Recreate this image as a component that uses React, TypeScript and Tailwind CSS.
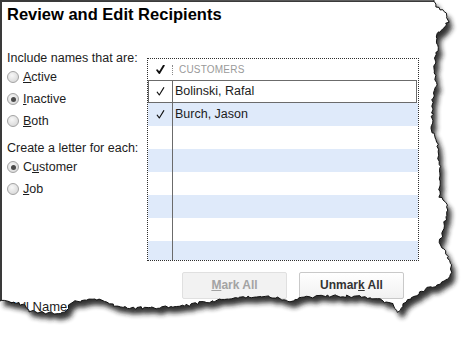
import React from 'react';

const RIGHT_EDGE: [number, number][] = [
  [434, 0], [437, 6], [446, 14], [448, 21], [444, 28], [437, 34], [438, 48], [434, 66], [436, 84],
  [433, 100], [432, 132], [437, 140], [439, 158], [441, 174], [439, 196], [447, 203], [446, 217],
  [443, 232], [440, 242], [446, 254], [452, 266], [450, 278], [440, 284],
];

const BOTTOM_EDGE: [number, number][] = [
  [430, 287], [418, 294], [408, 300], [402, 306], [399, 313], [392, 304], [380, 300], [360, 297],
  [340, 296], [320, 296], [300, 298], [288, 302], [280, 298], [268, 297], [250, 297], [232, 298],
  [215, 301], [200, 303], [185, 306], [170, 307], [150, 308], [130, 308], [112, 305], [100, 300],
  [85, 300], [72, 302], [67, 310], [60, 313], [45, 313], [30, 311], [23, 305], [12, 302], [0, 301],
];

// deterministic jagged edge
function tornPoints() {
  let seed = 7;
  const rnd = () => {
    seed = (seed * 9301 + 49297) % 233280;
    return seed / 233280 - 0.5;
  };
  const key = [...RIGHT_EDGE, ...BOTTOM_EDGE];
  const out: [number, number][] = [];
  for (let i = 0; i < key.length - 1; i++) {
    const [x1, y1] = key[i];
    const [x2, y2] = key[i + 1];
    const steps = Math.max(1, Math.round(Math.hypot(x2 - x1, y2 - y1) / 2.5));
    for (let s = 0; s < steps; s++) {
      const t = s / steps;
      out.push([x1 + (x2 - x1) * t + rnd() * 2.6, y1 + (y2 - y1) * t + rnd() * 2.6]);
    }
  }
  out.push(key[key.length - 1]);
  return out;
}

function TornEdge() {
  const pts = tornPoints();
  const edge = pts.map((p, i) => `${i ? 'L' : 'M'}${p[0].toFixed(1)} ${p[1].toFixed(1)}`).join(' ');
  const page = `M0 0 ${edge.replace(/^M/, 'L')} L0 0 Z`;
  return (
    <svg className="pointer-events-none absolute inset-0" width="475" height="342" viewBox="0 0 475 342">
      <defs>
        <mask id="outside">
          <rect width="475" height="342" fill="white" />
          <path d={page} fill="black" />
        </mask>
        <filter id="blur" x="-10%" y="-10%" width="120%" height="120%">
          <feGaussianBlur stdDeviation="2.8" />
        </filter>
      </defs>
      <g mask="url(#outside)">
        <rect width="475" height="342" fill="white" />
        <path d={page} transform="translate(4 6)" fill="#1e1e1e" opacity="0.9" filter="url(#blur)" />
      </g>
      <path d={edge} fill="none" stroke="#111" strokeWidth="1" />
    </svg>
  );
}

function Radio({ checked, children }: { checked?: boolean; children: React.ReactNode }) {
  return (
    <div className="flex h-[22px] items-center gap-[4px]">
      <span className="flex h-[12px] w-[12px] items-center justify-center rounded-full border border-[#a3a3a3] bg-[radial-gradient(circle_at_40%_35%,#f7f7f7,#d2d2d2)]">
        {checked && <span className="h-[5px] w-[5px] rounded-full bg-[#4a4a4a]" />}
      </span>
      <span>{children}</span>
    </div>
  );
}

function Check({ bold }: { bold?: boolean }) {
  return (
    <svg width="9" height="9" viewBox="0 0 9 9">
      <path d="M1.2 5.2 L3.3 8 L7.8 0.6" fill="none" stroke="#111" strokeWidth={bold ? 1.9 : 1.1} strokeLinecap="round" strokeLinejoin="round" />
    </svg>
  );
}

const ROWS = ['Bolinski, Rafal', 'Burch, Jason', '', '', '', '', '', ''];

export default function App() {
  return (
    <div className="relative h-[342px] w-[475px] overflow-hidden bg-white font-['Liberation_Sans',Arial,sans-serif] text-[#1c1c1c]">
      <div className="h-[320px] w-[460px] border-l-2 border-t-2 border-[#3a3a3a] pl-[5px] pt-[3px]">
        <h1 className="h-[19px] text-[16.5px] font-bold leading-[19px] text-black">Review and Edit Recipients</h1>

        <div className="mt-[27px] flex text-[12.5px] leading-[15px]">
          <div className="w-[140px]">
            <div className="h-[15px]">Include names that are:</div>
            <Radio><u>A</u>ctive</Radio>
            <Radio checked><u>I</u>nactive</Radio>
            <Radio><u>B</u>oth</Radio>
            <div className="mt-[9px] h-[15px]">Create a letter for each:</div>
            <Radio checked>C<u>u</u>stomer</Radio>
            <Radio><u>J</u>ob</Radio>
          </div>

          <div>
            <div className="mt-[7px] h-[203px] w-[272px] overflow-hidden border border-dotted border-[#2e2e2e] bg-white">
              <div className="flex h-[21px] items-center">
                <span className="flex w-[24px] justify-center pl-[1px]"><Check bold /></span>
                <span className="h-[10px] border-l border-dotted border-[#888]" />
                <span className="ml-[6px] text-[10px] tracking-[0.2px] text-[#9a9a9a]">CUSTOMERS</span>
              </div>
              {ROWS.map((name, i) => (
                <div
                  key={i}
                  className={`flex h-[23px] items-center text-[12.5px] ${i === 0 ? 'mr-[1px] border border-[#6b6b6b] bg-white' : i % 2 === 1 ? 'bg-[#dfeafa]' : 'bg-white'}`}
                >
                  <span className={`flex h-full items-center justify-center ${i === 0 ? 'w-[23px]' : 'w-[24px]'}`}>
                    {name && <Check />}
                  </span>
                  <span className="flex h-full items-center border-l border-[#6b6b6b] pl-[2px]">{name}</span>
                </div>
              ))}
            </div>

            <div className="ml-[35px] mt-[11px] flex gap-[12px] text-[12px] font-bold">
              <button className="h-[27px] w-[105px] rounded-[2px] border border-[#e0e0e0] bg-[#f2f2f2] text-[#a3a3a3]">
                <u>M</u>ark All
              </button>
              <button className="h-[27px] w-[105px] rounded-[2px] border border-[#c9c9c9] bg-[linear-gradient(#ffffff,#f1f1f1)] text-[#333]">
                Unmar<u>k</u> All
              </button>
            </div>
          </div>
        </div>

        <div className="pl-[1px] text-[13px] leading-[15px]">Full Name</div>
      </div>
      <TornEdge />
    </div>
  );
}
